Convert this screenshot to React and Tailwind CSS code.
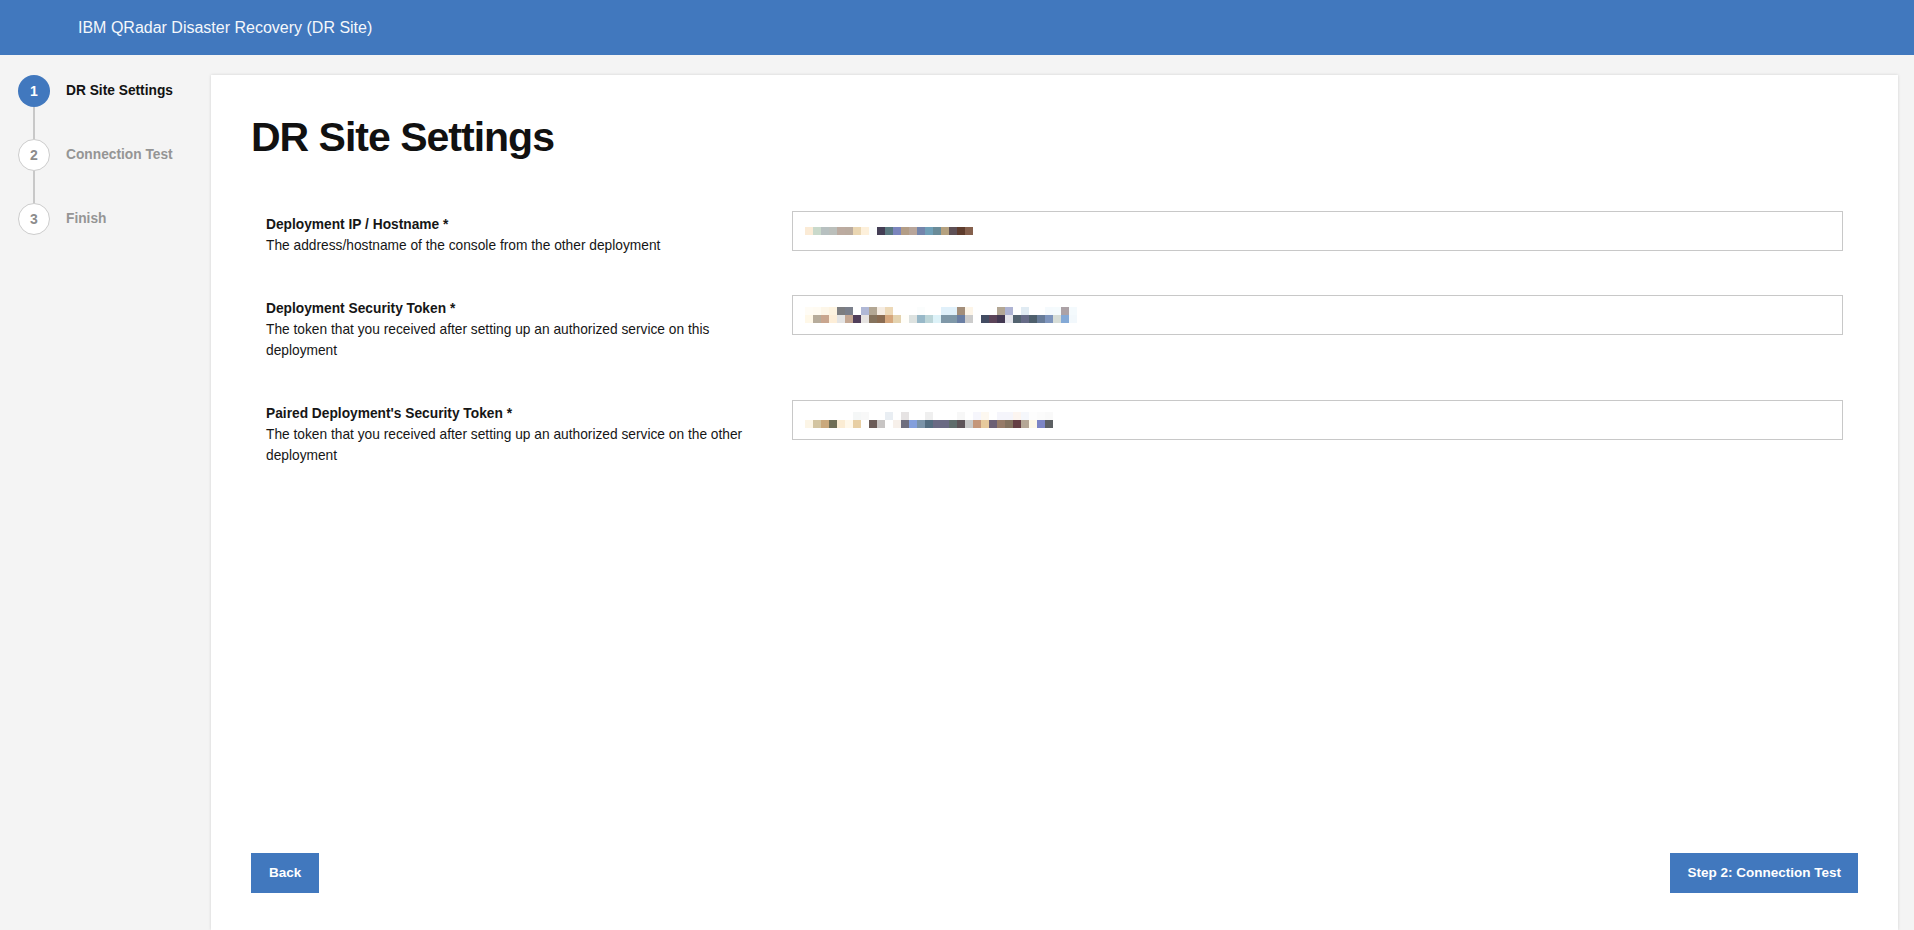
import React from 'react';

const W = '#fff';

// pixelated (redacted) values shown in the inputs
const masks = {
  host: [
    ['#fbebd6', '#c9d9cb', '#b7c0c0', '#bbbfbb', '#bcaba0', '#baab9f', '#ead6b2', '#fdf0db', '#fbfdfd', '#443e55', '#5a7980', '#7b85bd', '#b39d86', '#b8a59a', '#7485ac', '#70a0b8', '#6a8b98', '#b5a17f', '#5e5056', '#5e3c2d', '#85604d'],
  ],
  token: [
    ['#fffcf5', '#fffbf2', '#fdf6e8', '#fdf3e0', '#7c7d80', '#7a7f8b', W, '#b0b8d6', '#b3a794', '#f5ece2', '#edd9b8', W, W, W, '#fbfdfd', W, W, '#e0f0fa', '#e0f0fa', '#a38e7a', '#fdf5e8', W, W, W, '#b3a795', '#aeb3d3', W, '#e0ebf3', W, W, '#f5fafd', '#f5fbfd', '#aca2a6', '#f4fafd'],
    ['#fff8e8', '#b7ac9b', '#c9a68f', '#fdeed8', '#e4e4e4', '#c4a793', '#503e5a', '#e6e3e1', '#85735d', '#8a6c52', '#d6a77d', '#e4d3b0', '#fffefa', '#dde2e0', '#98b8c8', '#bcd5d8', '#ddf2f8', '#7f98a8', '#7f98a8', '#6a7ea3', '#cccccc', W, '#434c62', '#5b4459', '#433852', '#e5e5ec', '#536370', '#666b87', '#4e5f6c', '#687c99', '#7e95bd', '#d7ddd7', '#84a9d6', '#f2f8fc'],
  ],
  paired: [
    [W, W, W, W, W, W, '#f5f7f7', '#f8f8f8', W, W, '#e9eef3', W, '#e6e3e3', W, W, '#efefef', W, W, W, '#f7f7f7', W, '#f6f6fc', '#fdf8f0', W, '#f5f5fb', '#f5f5fb', '#fcf5f0', '#f5f7fb', '#fdfdfd', '#fbfbfb', '#f9f9f9'],
    ['#fcf5e6', '#d3c4a0', '#c9a87c', '#6f6e56', '#fbecd3', '#fff8ea', '#e8cfa4', W, '#6b5c58', '#c8c5c4', W, '#f7f0ea', '#6e6e7e', '#839fdc', '#7a93a8', '#536d80', '#6a6a84', '#6a6a84', '#5f6d6c', '#5d5458', '#c8c9c8', '#c49679', '#e6c99c', '#6c6074', '#967b68', '#83725f', '#643e44', '#b5a796', '#fdf8e8', '#7c85c5', '#5c6063'],
  ],
};

const steps = [
  { n: 1, label: 'DR Site Settings', active: true },
  { n: 2, label: 'Connection Test' },
  { n: 3, label: 'Finish' },
];

const fields = [
  {
    label: 'Deployment IP / Hostname *',
    help: 'The address/hostname of the console from the other deployment',
    mask: masks.host,
  },
  {
    label: 'Deployment Security Token *',
    help: 'The token that you received after setting up an authorized service on this deployment',
    mask: masks.token,
  },
  {
    label: "Paired Deployment's Security Token *",
    help: 'The token that you received after setting up an authorized service on the other deployment',
    mask: masks.paired,
  },
];

const Mosaic = ({ rows }) => (
  <div className="flex flex-col">
    {rows.map((row, i) => (
      <div key={i} className="flex">
        {row.map((c, j) => (
          <span key={j} className="block w-2 h-2" style={{ backgroundColor: c }} />
        ))}
      </div>
    ))}
  </div>
);

const Stepper = () => (
  <div className="flex flex-col">
    {steps.map((s, i) => (
      <div key={s.n}>
        {i > 0 && <div className="w-[2px] h-[32px] ml-[15px] bg-[#c8c8c8]" />}
        <div className="flex items-center gap-[16px]">
          <div
            className={`w-[32px] h-[32px] rounded-full flex items-center justify-center text-[14px] font-bold ${
              s.active ? 'bg-[#4178be] text-white' : 'bg-white border border-[#cccccc] text-[#8c8c8c]'
            }`}
          >
            {s.n}
          </div>
          <span className={`text-[13.75px] font-bold ${s.active ? 'text-[#121212]' : 'text-[#959595]'}`}>
            {s.label}
          </span>
        </div>
      </div>
    ))}
  </div>
);

export default function App() {
  return (
    <div className="h-screen overflow-hidden flex flex-col bg-[#f4f4f4] font-['Liberation_Sans',Arial,sans-serif]">
      <header className="h-[55px] shrink-0 bg-[#4178be] flex items-center pl-[78px] text-[16px] text-[#f4f7fb]">
        IBM QRadar Disaster Recovery (DR Site)
      </header>

      <div className="flex flex-1 min-h-0">
        <aside className="w-[211px] shrink-0 pt-[20px] pl-[18px]">
          <Stepper />
        </aside>

        <main className="flex-1 flex flex-col mt-[20px] mr-[16px] bg-white shadow-[0_0_3px_rgba(0,0,0,0.14)] pt-[42px] px-[40px] pb-[37px]">
          <h1 className="text-[41px] leading-none font-bold tracking-[-1px] text-[#111111]">DR Site Settings</h1>

          <div className="mt-[53px] px-[15px]">
            {fields.map((f) => (
              <div key={f.label} className="flex items-start mb-[39px]">
                <div className="w-1/3 pr-[15px] pt-[3px] text-[13.75px] leading-[21px] text-[#161616]">
                  <div className="font-bold">{f.label}</div>
                  <div>{f.help}</div>
                </div>
                <div className="w-2/3 h-[40px] border border-[#c8c8c8] flex items-center pl-[12px]">
                  <Mosaic rows={f.mask} />
                </div>
              </div>
            ))}
          </div>

          <div className="flex-1" />

          <div className="flex justify-between">
            <button className="h-[40px] px-[18px] bg-[#4178be] text-white text-[13.5px] font-bold">Back</button>
            <button className="h-[40px] px-[17px] bg-[#4178be] text-white text-[13.5px] font-bold">
              Step 2: Connection Test
            </button>
          </div>
        </main>
      </div>
    </div>
  );
}
